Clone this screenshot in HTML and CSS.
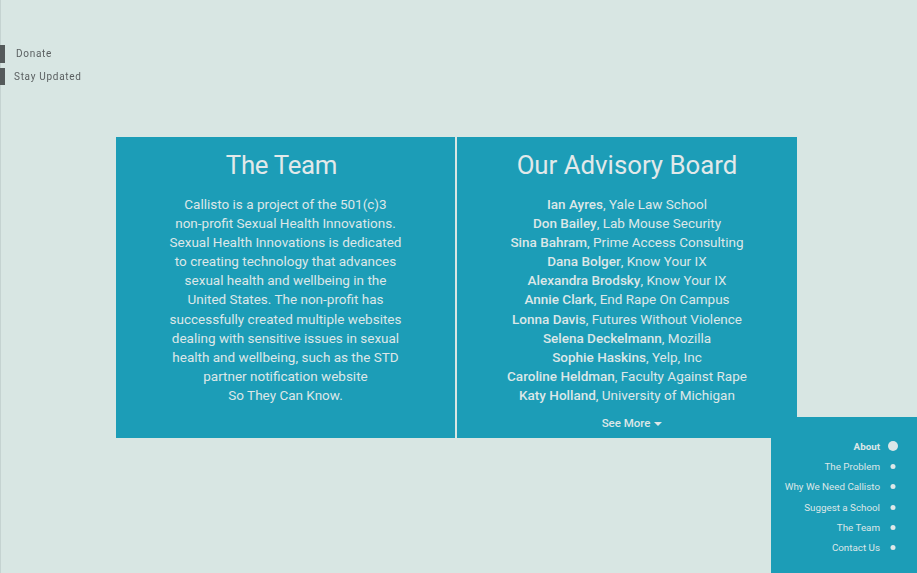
FILE: index.html
```html
<!DOCTYPE html>
<html>
<head>
<meta charset="utf-8">
<link rel="stylesheet" href="styles.css">
</head>
<body>
<div class="edge"></div>
<div class="tabs">
  <a class="tab tab-donate">Donate</a>
  <a class="tab tab-stay">Stay Updated</a>
</div>
<main class="main">
  <section class="panel panel-left">
    <h2 class="panel-title title-left">The Team</h2>
    <p class="panel-text">Callisto is a project of the 501(c)3<br>non-profit Sexual Health Innovations.<br>Sexual Health Innovations is dedicated<br>to creating technology that advances<br>sexual health and wellbeing in the<br>United States. The non-profit has<br>successfully created multiple websites<br>dealing with sensitive issues in sexual<br>health and wellbeing, such as the STD<br>partner notification website<br>So They Can Know.</p>
  </section>
  <section class="panel panel-right">
    <h2 class="panel-title">Our Advisory Board</h2>
    <ul class="board">
      <li><b>Ian Ayres</b>, Yale Law School</li>
      <li><b>Don Bailey</b>, Lab Mouse Security</li>
      <li><b>Sina Bahram</b>, Prime Access Consulting</li>
      <li><b>Dana Bolger</b>, Know Your IX</li>
      <li><b>Alexandra Brodsky</b>, Know Your IX</li>
      <li><b>Annie Clark</b>, End Rape On Campus</li>
      <li><b>Lonna Davis</b>, Futures Without Violence</li>
      <li><b>Selena Deckelmann</b>, Mozilla</li>
      <li><b>Sophie Haskins</b>, Yelp, Inc</li>
      <li><b>Caroline Heldman</b>, Faculty Against Rape</li>
      <li><b>Katy Holland</b>, University of Michigan</li>
    </ul>
    <div class="see-more">See More <span class="caret"></span></div>
  </section>
</main>
<nav class="sidenav">
  <ul class="sidenav-list">
    <li class="nav-item active">About <span class="dot"></span></li>
    <li class="nav-item">The Problem <span class="dot"></span></li>
    <li class="nav-item">Why We Need Callisto <span class="dot"></span></li>
    <li class="nav-item">Suggest a School <span class="dot"></span></li>
    <li class="nav-item">The Team <span class="dot"></span></li>
    <li class="nav-item">Contact Us <span class="dot"></span></li>
  </ul>
</nav>
</body>
</html>
```
FILE: styles.css
```css
html, body {
  margin: 0;
  padding: 0;
  height: 100%;
}
body {
  background: #d8e6e3;
  font-family: Roboto, "Liberation Sans", sans-serif;
  color: #dce7e8;
  overflow: hidden;
}
.edge {
  position: fixed;
  left: 0;
  top: 0;
  bottom: 0;
  width: 1px;
  background: #c5d3d1;
}
.tabs {
  position: fixed;
  left: 0;
  top: 45px;
  display: flex;
  flex-direction: column;
  gap: 5px;
}
.tab {
  display: block;
  height: 17.5px;
  line-height: 17px;
  font-size: 10px;
  letter-spacing: 0.7px;
  color: #5a5f60;
  border-left: 5px solid #555a5b;
}
.tab-donate { padding-left: 11px; }
.tab-stay { padding-left: 9px; }
.main {
  display: flex;
  gap: 2px;
  padding: 137px 0 0 116px;
}
.panel {
  background: #1c9db7;
  height: 301px;
  box-sizing: border-box;
  text-align: center;
  padding-top: 12px;
}
.panel-left { width: 339px; }
.panel-right { width: 340px; }
.panel-title {
  margin: 0;
  font-weight: 400;
  font-size: 25.8px;
  line-height: 32px;
  color: #e2e9ea;
}
.title-left { padding-right: 8px; letter-spacing: -0.3px; }
.panel-text {
  margin: 14px 0 0;
  font-size: 13.5px;
  line-height: 19.1px;
}
.board {
  list-style: none;
  margin: 14px 0 0;
  padding: 0;
  font-size: 13.5px;
  line-height: 19.1px;
}
.board b { font-weight: 500; }
.see-more {
  margin-top: 10px;
  padding-left: 10px;
  font-size: 11.5px;
  font-weight: 500;
  line-height: 16px;
}
.caret {
  display: inline-block;
  width: 0;
  height: 0;
  border-left: 4px solid transparent;
  border-right: 4px solid transparent;
  border-top: 4px solid #dce7e8;
  vertical-align: middle;
  margin-left: 1px;
}
.sidenav {
  position: fixed;
  left: 771px;
  top: 417px;
  width: 146px;
  height: 156px;
  background: #1c9db7;
}
.sidenav-list {
  list-style: none;
  margin: 0;
  padding: 19px 0 0;
}
.nav-item {
  display: flex;
  justify-content: flex-end;
  align-items: center;
  height: 20.3px;
  font-size: 9.8px;
  padding-right: 37px;
  position: relative;
}
.nav-item .dot {
  position: absolute;
  right: 24px;
  width: 5px;
  height: 5px;
  border-radius: 50%;
  background: #dce7e8;
  transform: translateX(50%);
}
.nav-item.active { font-weight: 700; }
.nav-item.active .dot {
  width: 10px;
  height: 10px;
}
```
